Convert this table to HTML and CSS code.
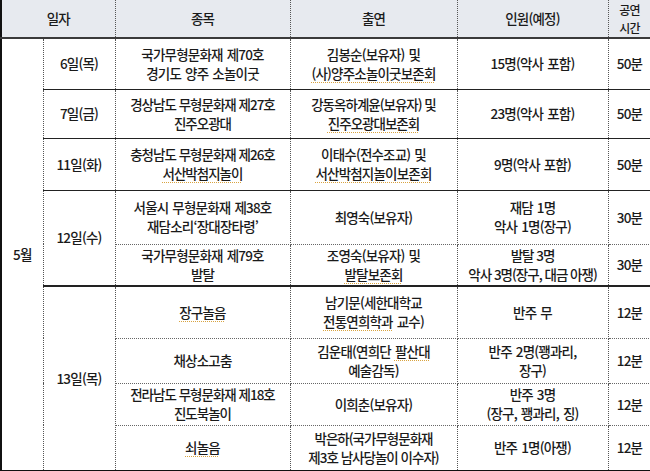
FILE: index.html
```html
<!DOCTYPE html>
<html lang="ko">
<head>
<meta charset="utf-8">
<link rel="stylesheet" href="styles.css">
</head>
<body>
<table class="sched">
  <colgroup>
    <col class="c-month"><col class="c-day"><col class="c-title"><col class="c-cast"><col class="c-people"><col class="c-time">
  </colgroup>
  <thead>
    <tr class="r-head">
      <th colspan="2">일자</th>
      <th>종목</th>
      <th>출연</th>
      <th>인원(예정)</th>
      <th class="tight"><span class="hl">공연</span><span class="hl">시간</span></th>
    </tr>
  </thead>
  <tbody>
    <tr class="r1 grp">
      <td rowspan="9" class="month">5월</td>
      <td>6일(목)</td>
      <td>국가무형문화재 제70호<br>경기도 양주 소놀이굿</td>
      <td>김봉순(보유자) 및<br><span class="sp">(사)양주소놀이굿보존회</span></td>
      <td>15명(악사 포함)</td>
      <td>50분</td>
    </tr>
    <tr class="r2 grp">
      <td>7일(금)</td>
      <td class="cond">경상남도 무형문화재 제27호<br>진주오광대</td>
      <td class="cond">강동옥하계윤(보유자) 및<br><span class="sp">진주오광대보존회</span></td>
      <td>23명(악사 포함)</td>
      <td>50분</td>
    </tr>
    <tr class="r3 grp">
      <td>11일(화)</td>
      <td class="cond">충청남도 무형문화재 제26호<br><span class="sp">서산박첨지놀이</span></td>
      <td>이태수(전수조교) 및<br><span class="sp">서산박첨지놀이보존회</span></td>
      <td>9명(악사 포함)</td>
      <td>50분</td>
    </tr>
    <tr class="r4 sub">
      <td rowspan="2" class="day-end">12일(수)</td>
      <td>서울시 무형문화재 제38호<br>재담소리‘장대장타령’</td>
      <td>최영숙(보유자)</td>
      <td>재담 1명<br>악사 1명(장구)</td>
      <td>30분</td>
    </tr>
    <tr class="r5 grp2">
      <td>국가무형문화재 제79호<br>발탈</td>
      <td>조영숙(보유자) 및<br><span class="sp">발탈보존회</span></td>
      <td class="cond">발탈 3명<br>악사 3명(장구, 대금 아쟁)</td>
      <td>30분</td>
    </tr>
    <tr class="r6 sub">
      <td rowspan="4" class="last">13일(목)</td>
      <td><span class="sp">장구놀음</span></td>
      <td>남기문(세한대학교<br><span class="sp">전통연희학과</span> 교수)</td>
      <td>반주 무</td>
      <td>12분</td>
    </tr>
    <tr class="r7 sub">
      <td>채상소고춤</td>
      <td>김운태(연희단 <span class="sp">팔산대</span><br>예술감독)</td>
      <td>반주 2명(꽹과리,<br>장구)</td>
      <td>12분</td>
    </tr>
    <tr class="r8 sub">
      <td class="cond">전라남도 무형문화재 제18호<br>진도북놀이</td>
      <td>이희춘(보유자)</td>
      <td>반주 3명<br>(장구, 꽹과리, 징)</td>
      <td>12분</td>
    </tr>
    <tr class="r9 last">
      <td><span class="sp">쇠놀음</span></td>
      <td class="cond">박은하(국가무형문화재<br>제3호 남사당놀이 이수자)</td>
      <td>반주 1명(아쟁)</td>
      <td>12분</td>
    </tr>
  </tbody>
</table>
</body>
</html>
```

FILE: styles.css
```css
html, body {
  margin: 0;
  padding: 0;
  background: #ffffff;
}

.sched {
  width: 650px;
  border-collapse: collapse;
  table-layout: fixed;
  font-family: "Noto Sans CJK KR", "Noto Sans", sans-serif;
  font-size: 13.5px;
  font-weight: 500;
  line-height: 19px;
  letter-spacing: -0.8px;
  word-spacing: 1px;
  color: #1a1a1a;
  border-left: 2px solid #111111;
  border-right: 1px solid #111111;
  border-bottom: 2px solid #111111;
}

.c-month { width: 42px; }
.c-day { width: 72px; }
.c-title { width: 175px; }
.c-cast { width: 167px; }
.c-people { width: 151px; }
.c-time { width: 43px; }

.sched th,
.sched td {
  padding: 0;
  text-align: center;
  vertical-align: middle;
  font-weight: 500;
  white-space: nowrap;
  border-right: 1px dotted #555555;
}

.sched th {
  background: #e7eaef;
  height: 37px;
  border-bottom: 2px solid #3a3a3a;
}

.sched th.tight {
  font-size: 12px;
  line-height: 12px;
}

.hl {
  display: block;
  height: 17.5px;
  line-height: 17.5px;
}

.sched td {
  border-bottom: 1px dotted #666666;
}

.grp td {
  border-bottom: 1px solid #222222;
}

.grp2 td,
.day-end {
  border-bottom: 2px solid #222222 !important;
}

.sched td.month,
.sched td.last {
  border-bottom: 2px solid #111111;
}

.last td {
  border-bottom: 2px solid #111111;
}

.r1 { height: 51px; }
.r2 { height: 49px; }
.r3 { height: 52px; }
.r4 { height: 54px; }
.r5 { height: 42px; }
.r6 { height: 52px; }
.r7 { height: 45px; }
.r8 { height: 42px; }
.r9 { height: 46px; }

.cond {
  letter-spacing: -1px;
  word-spacing: 0;
}

.sp {
  text-decoration: underline dotted #d9a441;
  text-decoration-thickness: 1px;
  text-underline-offset: 3px;
}
```
